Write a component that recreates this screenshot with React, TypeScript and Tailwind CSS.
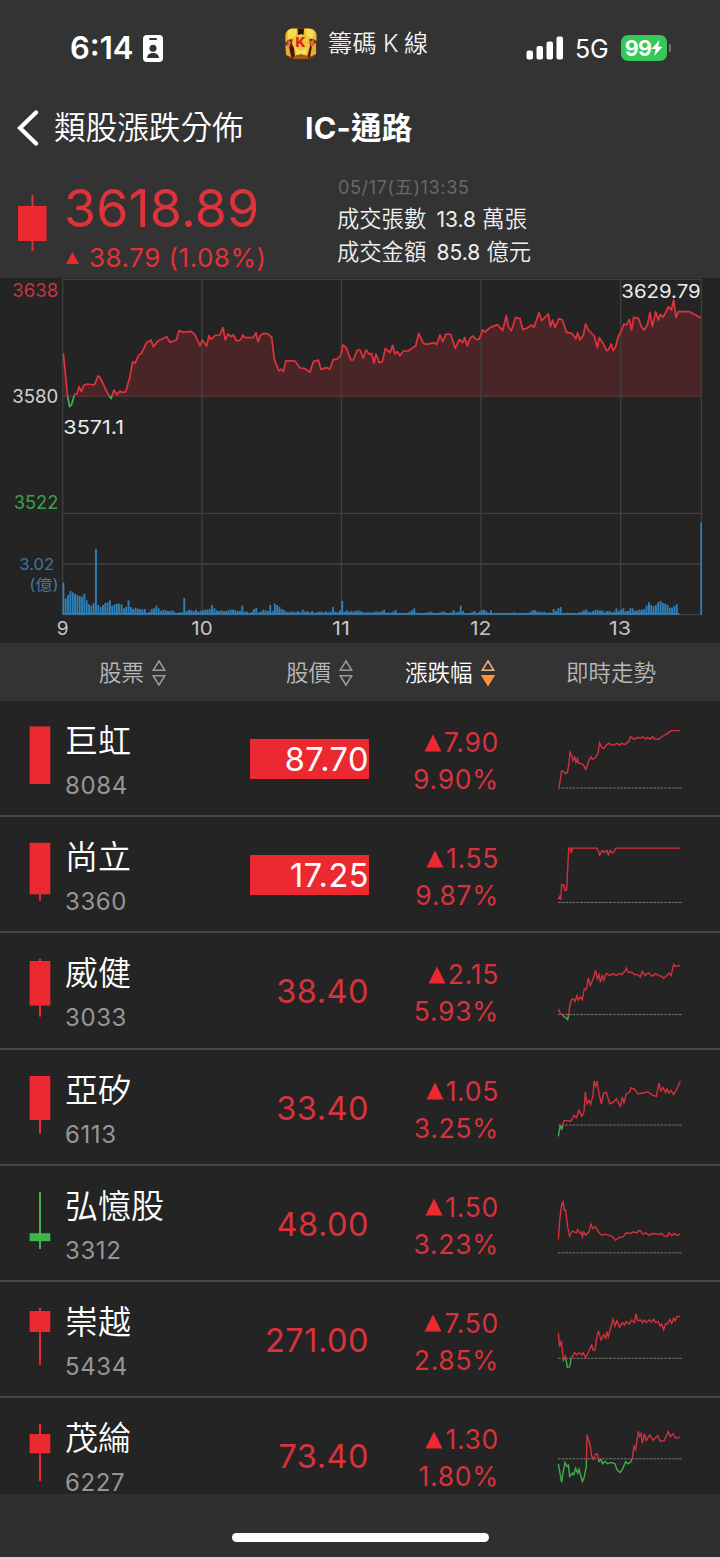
import React from "react";

type Pt = [number, number];

const RED = "#e0323d";
const GREEN = "#3fae4e";

function toPoints(values: string, dx = 0): Pt[] {
  return values
    .trim()
    .split(/\s+/)
    .map((p) => {
      const [x, y] = p.split(",").map(Number);
      return [x + dx, y] as Pt;
    });
}

const toPath = (pts: Pt[]) => "M" + pts.map((p) => p.join(" ")).join("L");

/* Index price, in thirds of a pixel */
const PRICE: Pt[] = [
  ...toPoints(
    "190,250 203,380 209,410 215,403 224,372 231,372 237,350 244,365 252,345 262,342 283,345 294,318 300,322 322,368 333,386 342,360 351,374 360,363 366,368 377,365 390,320 398,275 405,280 416,255 424,250 440,218 453,210 460,230 475,212 500,200 510,217 529,210 537,182 550,187 573,184 585,195 600,227 607,210 620,228 627,197 633,208 645,197 660,195 669,173 676,210 684,192 693,200 700,195 710,213 720,210",
  ),
  ...toPoints(
    "4,206 8,195 15,203 40,203 48,188 54,215 62,195 72,190 85,192 95,202 103,268 117,303 123,297 130,304 138,272 165,273 180,294 195,296 210,306 220,275 235,270 243,298 258,293 270,297 280,268 290,268 303,255 308,225 318,232 333,270 340,270 352,240 360,240 370,264 378,240 390,254 395,250 402,280 408,252 418,278 427,275 436,235 450,248 458,226 465,252 472,245 480,257 490,243 505,243 520,232 527,228 536,190 550,220 560,223 583,218 590,224 600,195 608,215 618,192 632,193 646,235 658,208 668,218 674,203 682,228",
    720,
  ),
  ...toPoints(
    "0,205 8,198 18,208 27,208 38,180 45,186 60,173 82,164 98,182 109,136 115,170 124,182 137,142 150,146 158,178 170,175 185,165 192,172 207,128 215,152 235,132 241,170 248,150 255,172 267,146 277,150 290,187 305,190 318,206 323,188 330,210 340,195 347,162 355,180 373,198 382,233 388,203 400,222 410,242 415,240 424,222 430,242 437,230 445,198 453,185 462,162 470,165 478,148 485,180 491,142 505,145 515,172 522,180 532,165 540,128 547,170 557,125 565,150 571,133 578,142 586,130 595,110 604,120 611,90 618,143 625,125 658,125 692,143",
    1410,
  ),
];

/* Turnover per minute from 09:00 */
const VOLUME = [
  95, 48, 58, 70, 66, 62, 57, 55, 53, 62, 42, 30, 26, 34, 196, 28, 22, 28, 34, 36, 42, 26, 30, 32, 32, 30, 18, 22, 42,
  22, 16, 20, 17, 16, 15, 16, 5, 8, 16, 18, 26, 18, 10, 14, 12, 10, 10, 12, 6, 4, 6, 6, 49, 10, 14, 12, 10, 14, 8, 10,
  12, 14, 14, 16, 28, 18, 12, 10, 12, 10, 10, 12, 14, 14, 12, 10, 10, 26, 8, 8, 4, 8, 16, 20, 6, 8, 14, 12, 10, 28,
  10, 32, 28, 22, 16, 12, 8, 6, 8, 8, 6, 10, 6, 14, 8, 10, 6, 10, 5, 6, 8, 8, 6, 8, 6, 8, 22, 8, 6, 12, 40, 8, 12, 8,
  10, 8, 10, 12, 9, 6, 6, 6, 6, 6, 8, 8, 8, 10, 14, 5, 5, 5, 8, 13, 4, 4, 4, 4, 4, 8, 12, 18, 5, 4, 4, 4, 5, 6, 8, 5,
  4, 4, 5, 8, 8, 4, 4, 6, 12, 5, 8, 26, 10, 4, 4, 4, 8, 10, 4, 8, 12, 14, 10, 4, 12, 4, 4, 4, 4, 4, 4, 4, 4, 4, 6, 4,
  4, 4, 4, 4, 4, 8, 13, 12, 8, 8, 6, 8, 4, 6, 4, 16, 10, 18, 22, 4, 4, 5, 4, 4, 5, 4, 6, 8, 12, 14, 8, 6, 10, 14, 12,
  12, 12, 6, 10, 10, 6, 8, 18, 10, 14, 18, 10, 10, 18, 18, 10, 12, 14, 14, 16, 26, 36, 28, 24, 28, 36, 40, 34, 32, 28,
  20, 20, 26, 30,
];

type Stock = {
  name: string;
  code: string;
  price: string;
  limitUp?: boolean;
  change: string;
  percent: string;
  candle: { color: string; body: Pt; wick: Pt };
  spark: { top: number; base: number; points: string };
};

const CANDLE_RED = "#ec2930";

const STOCKS: Stock[] = [
  {
    name: "巨虹",
    code: "8084",
    price: "87.70",
    limitUp: true,
    change: "7.90",
    percent: "9.90%",
    candle: { color: CANDLE_RED, body: [25.5, 83], wick: [25.5, 83] },
    spark: {
      top: 3,
      base: 264,
      points:
        "538,262 546,213 553,215 557,220 563,218 568,190 571,156 577,168 580,182 585,172 589,188 593,176 597,190 604,190 612,196 618,208 622,200 628,180 634,170 638,178 646,174 655,160 660,128 666,142 674,145 680,135 688,130 700,136 712,130 720,136 726,130 735,134 748,124 752,110 764,118 774,112 782,115 790,110 798,118 804,112 812,118 818,110 826,118 836,118 850,108 864,100 874,92 900,92",
    },
  },
  {
    name: "尚立",
    code: "3360",
    price: "17.25",
    limitUp: true,
    change: "1.55",
    percent: "9.87%",
    candle: { color: CANDLE_RED, body: [25.8, 77.3], wick: [25.8, 83.8] },
    spark: {
      top: 351.6,
      base: 608,
      points:
        "536,598 540,590 543,600 546,555 552,555 556,572 561,570 567,445 572,445 575,460 578,445 652,445 658,458 660,466 668,452 674,458 682,452 686,465 692,452 698,460 702,458 708,445 902,445",
    },
  },
  {
    name: "威健",
    code: "3033",
    price: "38.40",
    change: "2.15",
    percent: "5.93%",
    candle: { color: CANDLE_RED, body: [28, 72.6], wick: [25.6, 83.6] },
    spark: {
      top: 700.2,
      base: 945,
      points:
        "536,928 542,942 548,944 552,950 560,956 564,960 568,940 570,920 576,900 582,898 586,905 592,888 596,902 602,892 608,900 614,868 620,870 626,835 632,858 640,840 648,812 653,838 658,825 662,848 668,825 672,842 680,822 690,828 700,822 710,828 718,822 726,825 736,815 740,806 746,818 756,818 764,825 774,825 782,832 788,815 796,828 806,820 818,830 828,822 836,828 846,830 852,836 862,828 868,820 874,828 882,795 888,800 902,798",
    },
  },
  {
    name: "亞矽",
    code: "6113",
    price: "33.40",
    change: "1.05",
    percent: "3.25%",
    candle: { color: CANDLE_RED, body: [26, 70], wick: [26, 83.6] },
    spark: {
      top: -1.2,
      base: 224,
      points:
        "536,258 542,222 546,238 553,210 558,210 566,212 574,212 583,195 590,202 598,180 606,198 613,185 617,124 622,160 628,150 633,162 640,135 643,92 648,108 652,92 658,130 665,160 672,128 680,126 690,160 702,155 710,145 722,168 728,140 733,158 740,130 750,125 754,112 764,116 774,130 790,128 804,124 820,135 830,138 838,98 844,122 850,112 858,126 862,116 868,128 874,120 882,132 892,115 902,92",
    },
  },
  {
    name: "弘憶股",
    code: "3312",
    price: "48.00",
    change: "1.50",
    percent: "3.23%",
    candle: { color: "#3db54a", body: [67.2, 75.2], wick: [26, 83] },
    spark: {
      top: 347.4,
      base: 608,
      points:
        "536,568 540,510 546,462 550,455 554,480 558,480 564,530 570,558 578,542 590,548 594,538 600,548 604,545 608,560 612,545 618,555 628,545 634,522 640,535 648,530 658,548 666,555 676,552 688,555 698,560 708,570 718,562 730,560 740,548 750,550 762,545 770,548 780,540 790,552 798,548 808,555 820,550 834,552 846,550 852,556 862,560 868,548 876,556 884,550 890,556 902,552",
    },
  },
  {
    name: "崇越",
    code: "5434",
    price: "271.00",
    change: "7.50",
    percent: "2.85%",
    candle: { color: CANDLE_RED, body: [29, 50], wick: [26, 83] },
    spark: {
      top: 6,
      base: 235,
      points:
        "536,160 540,200 545,182 551,240 557,228 563,262 570,260 575,232 580,228 585,218 592,225 598,218 606,225 610,218 618,232 624,222 630,208 636,195 640,210 646,210 650,180 656,152 664,180 672,165 678,175 682,155 686,170 692,148 700,118 706,138 712,122 720,142 728,128 734,135 740,125 748,132 756,120 764,128 769,102 774,122 784,120 788,128 794,120 800,128 808,120 816,126 822,118 828,128 836,125 842,138 846,132 852,150 858,130 864,132 870,118 876,130 882,115 886,122 892,110 902,110",
    },
  },
  {
    name: "茂綸",
    code: "6227",
    price: "73.40",
    change: "1.30",
    percent: "1.80%",
    candle: { color: CANDLE_RED, body: [36, 55.3], wick: [26, 83] },
    spark: {
      top: 354.6,
      base: 537,
      points:
        "536,552 546,608 550,580 556,548 562,560 566,556 570,590 578,580 582,585 588,565 594,580 598,568 604,590 608,605 613,595 617,575 620,560 622,465 628,485 632,500 636,530 642,538 648,522 654,525 658,545 664,538 668,552 676,545 684,552 694,548 706,552 712,570 722,578 730,565 738,545 744,552 752,548 758,535 763,500 768,510 776,455 780,470 784,462 788,490 794,462 800,482 810,465 820,482 834,468 842,485 854,482 866,455 872,470 880,462 888,475 902,472",
    },
  },
];

function IdBadgeIcon() {
  return (
    <svg className="h-[27px] w-5" viewBox="0 0 20 27">
      <rect width="20" height="27" rx="4" fill="#fff" />
      <rect x="6" y="3" width="8" height="2" rx="1" fill="#333" />
      <circle cx="10" cy="13.3" r="3.5" fill="#333" />
      <path d="M4 23c.3-3.600 2.800-5 6-5s5.700 1.400 6 5z" fill="#333" />
    </svg>
  );
}

function AppIcon() {
  return (
    <svg className="mt-[28px] h-[32px] w-[32px]" viewBox="0 0 32 32">
      <defs>
        <clipPath id="app-icon">
          <rect x="0.500" y="0.500" width="31" height="30.500" rx="7" />
        </clipPath>
      </defs>
      <g clipPath="url(#app-icon)">
        <rect width="32" height="32" fill="#7a3413" />
        <path d="M0 0h32v13l-4-2-5 0-7-3-8 3-5 1-3 3z" fill="#e9bd2c" />
        <path d="M3 2c3-2 7-2 9 0l-2 7-7 2zM20 1c4-1 8 0 9 3l-1 7-6-3z" fill="#f6dc52" />
        <path d="M12.500 0h6.500l-.5 7h-5.500z" fill="#221208" />
        <path d="M8 9l8-3 8 3 1 9-3 11H10L6.500 18z" fill="#efc63a" />
        <path d="M10 20l6 3 6-3-2 7h-8z" fill="#f9dd6a" />
        <path d="M5 12l4 8 1 9H7L3 20zM27 10l-2 9-2 10h3l3-9z" fill="#4a1208" />
        <path d="M0 17l4 1 2 11-5-2zM31 15l-4 3-2 11 6-3z" fill="#e0ad35" />
        <path d="M3 12l3 2-1 5-3-1zM28 11l-3 3 1 5 4-2z" fill="#e2683a" />
        <path d="M9 28l7-2 7 2v4H9z" fill="#a35a16" />
        <text
          x="15.500"
          y="19.400"
          textAnchor="middle"
          fontSize="13.5"
          fontWeight="800"
          fill="#d9231c"
          fontFamily="Inter, sans-serif"
        >
          K
        </text>
      </g>
    </svg>
  );
}

function StatusBar() {
  return (
    <div className="grid h-24 grid-cols-[285px_241px_194px]">
      <div className="flex items-start pt-[30px] pl-[70px]">
        <span className="w-[73px] text-[31px] leading-9 font-semibold">6:14</span>
        <div className="pt-[5px]">
          <IdBadgeIcon />
        </div>
      </div>
      <div className="flex items-start">
        <AppIcon />
        <span className="mt-[26px] ml-[11px] text-[24px] leading-9 font-[350] tracking-[0.5px] text-[#f2f2f2]">
          籌碼<span className="mr-[5px] ml-[6px]">K</span>線
        </span>
      </div>
      <div className="flex items-start pt-[35px]">
        <svg className="mt-px h-6 w-[38px]" viewBox="0 0 38 24" fill="#fff">
          <rect x="0.500" y="14.500" width="6.500" height="9" rx="2" />
          <rect x="10.500" y="10" width="6.500" height="13.500" rx="2" />
          <rect x="20.500" y="5.500" width="6.500" height="18" rx="2" />
          <rect x="30.500" y="0.500" width="6.500" height="23" rx="2" />
        </svg>
        <span className="ml-[11px] w-[46px] text-[25px] leading-[28px] tracking-[-0.3px]">5G</span>
        <div className="flex h-[26px] w-[46px] items-center justify-center rounded-[7px] bg-[#34c759]">
          <span className="text-[21.500px] leading-[26px] font-bold tracking-[-0.6px]">99</span>
          <svg className="h-4 w-[12px]" viewBox="0 0 12 16">
            <path d="M8.500 0L.5 9h4.300L3.200 16 11.500 6.700H7.200z" fill="#fff" />
          </svg>
        </div>
        <span className="mt-[9px] ml-[2px] h-[8px] w-[2px] rounded-r-full bg-[#777]" />
      </div>
    </div>
  );
}

function NavBar() {
  return (
    <div className="flex h-16 items-center pl-[17px]">
      <svg className="h-[36px] w-[22px]" viewBox="0 0 22 36" fill="none">
        <path d="M19 2.500L3 18l16 15.500" stroke="#fff" strokeWidth="4.200" strokeLinecap="round" />
      </svg>
      <span className="ml-[15px] w-[251px] text-[31.600px] leading-10 font-[350]">類股漲跌分佈</span>
      <span className="text-[30.500px] leading-10 font-bold tracking-[0.2px]">IC-通路</span>
    </div>
  );
}

function Summary() {
  return (
    <div className="flex h-[118px]">
      <svg className="h-[118px] w-[66px]" viewBox="0 0 66 118" fill={CANDLE_RED}>
        <rect x="18" y="46" width="28.500" height="35" />
        <rect x="31.500" y="35" width="2" height="56" />
      </svg>
      <div className="w-[272px] pt-[19px] text-[#e0323a]">
        <div className="-ml-[2px] text-[52px] leading-[60px] tracking-[0.1px]">3618.89</div>
        <div className="flex items-center pt-px text-[26px] leading-[36px] tracking-[0.500px]">
          <svg className="mr-[10px] h-[12px] w-[13px]" viewBox="0 0 13 12">
            <path d="M6.500 0L13 12H0z" fill="#ec2930" />
          </svg>
          38.79 (1.08%)
        </div>
      </div>
      <div className="-ml-px pt-[14px]">
        <div className="ml-px text-[18px] leading-[28px] tracking-[0.650px] text-[#686868]">05/17(五)13:35</div>
        <div className="text-[22.300px] leading-8 font-[350] text-[#f0f0f0]">
          <div className="pt-px">
            成交張數 <span className="ml-1 text-[21px] font-normal">13.8</span> 萬張
          </div>
          <div>
            成交金額 <span className="ml-1 text-[21px] font-normal">85.8</span> 億元
          </div>
        </div>
      </div>
    </div>
  );
}

function IndexChart() {
  const line = toPath(PRICE);
  const area = `${line}L2102 378L190 378Z`;
  return (
    <svg
      className="block h-[365px] w-full"
      viewBox="0 24 2160 1095"
      fontFamily="Inter, 'Noto Sans CJK TC', sans-serif"
    >
      <defs>
        <clipPath id="above">
          <rect x="0" y="0" width="2160" height="378" />
        </clipPath>
        <clipPath id="below">
          <rect x="0" y="378" width="2160" height="200" />
        </clipPath>
      </defs>
      <path d={area} fill="#4a2527" clipPath="url(#above)" />
      <g stroke="#3f3f3f" strokeWidth="4">
        <path d="M188 28H2104M188 730H2104M188 882H2104M188 1034H2104" />
        <path d="M188 28V1034M606 28V1034M1024 28V1034M1443 28V1034M1862 28V1034M2104 28V1034" />
      </g>
      <path d="M188 378H2104" stroke="#583538" strokeWidth="5" />
      <g fill="none" strokeWidth="5.200" strokeLinejoin="round">
        <path d={line} stroke={RED} clipPath="url(#above)" />
        <path d={line} stroke={GREEN} clipPath="url(#below)" />
      </g>
      <g fill="#2f80b9">
        {VOLUME.map((v, i) => (
          <rect key={i} x={187.5 + i * 6.97} y={1033 - v} width="5.600" height={v} />
        ))}
        <rect x="188" y="1029" width="1850" height="5" />
        <rect x="2101" y="757" width="5" height="277" />
      </g>
      <g fontSize="54" textAnchor="end">
        <text x="175" y="80" fill="#c9343d" textLength="138" lengthAdjust="spacingAndGlyphs">3638</text>
        <text x="175" y="400" fill="#d2d2d2" textLength="138" lengthAdjust="spacingAndGlyphs">3580</text>
        <text x="175" y="718" fill="#3f9f4b" textLength="134" lengthAdjust="spacingAndGlyphs">3522</text>
      </g>
      <g fontSize="48" fill="#3d76a3" textAnchor="end">
        <text x="162" y="901" textLength="104" lengthAdjust="spacingAndGlyphs">3.02</text>
        <text x="176" y="960" fontSize="46" textLength="88" lengthAdjust="spacingAndGlyphs">(億)</text>
      </g>
      <g fontSize="57" fill="#ececec">
        <text x="190" y="491" textLength="182" lengthAdjust="spacingAndGlyphs">3571.1</text>
        <text x="1864" y="85" textLength="238" lengthAdjust="spacingAndGlyphs">3629.79</text>
      </g>
      <g fontSize="57" fill="#c6c6c6" textAnchor="middle">
        <text x="188" y="1094">9</text>
        <text x="606" y="1094" textLength="64" lengthAdjust="spacingAndGlyphs">10</text>
        <text x="1023" y="1094" textLength="54" lengthAdjust="spacingAndGlyphs">11</text>
        <text x="1442" y="1094" textLength="64" lengthAdjust="spacingAndGlyphs">12</text>
        <text x="1860" y="1094" textLength="66" lengthAdjust="spacingAndGlyphs">13</text>
      </g>
    </svg>
  );
}

function SortIcon({ active = false }: { active?: boolean }) {
  return (
    <svg className="ml-[7px] h-[28px] w-[16px]" viewBox="0 0 16 28" fill="none" strokeWidth="1.600">
      <path d="M8 2L13.700 11.200H2.300z" stroke={active ? "#e8b583" : "#999"} />
      <path
        d="M8 26L2.300 16.800h11.400z"
        stroke={active ? "#ff9a3c" : "#999"}
        fill={active ? "#ff8f2e" : "none"}
      />
    </svg>
  );
}

function ColumnHeader() {
  return (
    <div className="grid h-[58px] grid-cols-[286px_119px_161px_1fr] items-center bg-[#333333] pt-px text-[22.500px] leading-8 font-[350] text-[#b8b8b8]">
      <div className="flex items-center pl-[99px]">
        股票
        <SortIcon />
      </div>
      <div className="flex items-center">
        股價
        <SortIcon />
      </div>
      <div className="flex items-center text-white">
        漲跌幅
        <SortIcon active />
      </div>
      <div>即時走勢</div>
    </div>
  );
}

function Sparkline({ id, spark }: { id: string; spark: Stock["spark"] }) {
  const d = toPath(toPoints(spark.points));
  const { top, base } = spark;
  return (
    <svg className="h-[116.200px] w-[126px]" viewBox={`532 ${top} 378 348.6`} fill="none">
      <defs>
        <clipPath id={`${id}-up`}>
          <rect x="532" y={top} width="378" height={base - top + 1} />
        </clipPath>
        <clipPath id={`${id}-down`}>
          <rect x="532" y={base + 1} width="378" height="200" />
        </clipPath>
      </defs>
      <path d={`M535 ${base}H908`} stroke="#757575" strokeWidth="3" strokeDasharray="8 3" />
      <path d={d} stroke="#d6303b" strokeWidth="4.200" clipPath={`url(#${id}-up)`} />
      <path d={d} stroke={GREEN} strokeWidth="4.200" clipPath={`url(#${id}-down)`} />
    </svg>
  );
}

function StockRow({ stock }: { stock: Stock }) {
  const { body, wick, color } = stock.candle;
  return (
    <div className="grid h-[116.200px] shrink-0 grid-cols-[65px_185px_119px_130px_1fr] border-b-2 border-[#474747]">
      <svg className="h-[116px] w-[65px]" viewBox="0 0 65 116" fill={color}>
        <rect x="29.600" y={body[0]} width="20.700" height={body[1] - body[0]} />
        <rect x="39" y={wick[0]} width="2" height={wick[1] - wick[0]} />
      </svg>
      <div className="pt-[19px] leading-[44px]">
        <div className="text-[33px] leading-[43px] font-[350]">{stock.name}</div>
        <div className="text-[24px] leading-[46px] tracking-[0.600px] text-[#969696]">{stock.code}</div>
      </div>
      <div className="pt-[38px]">
        <div
          className={
            stock.limitUp
              ? "h-10 bg-[#ec2930] text-right text-[32.500px] leading-[41px] tracking-[0.500px] text-white"
              : "h-10 text-right text-[32.500px] leading-[41px] tracking-[0.500px] text-[#d8323c]"
          }
        >
          {stock.price}
        </div>
      </div>
      <div className="pt-[23px] text-right text-[26.500px] leading-[37px] tracking-[0.700px] text-[#d8323c]">
        <div className="flex items-center justify-end">
          <svg className="mr-[2px] h-[18px] w-[18px]" viewBox="0 0 18 18">
            <path d="M9 0.500L17.500 17.500H0.500z" fill="#ec2930" />
          </svg>
          {stock.change}
        </div>
        <div>{stock.percent}</div>
      </div>
      <div className="pl-[58.300px]">
        <Sparkline id={`s${stock.code}`} spark={stock.spark} />
      </div>
    </div>
  );
}

export default function App() {
  return (
    <div className="flex h-[1557px] w-[720px] flex-col overflow-hidden bg-[#242424] font-[Inter,'Noto_Sans_CJK_TC',sans-serif] whitespace-nowrap text-white">
      <header className="h-[278px] shrink-0 bg-[#333333]">
        <StatusBar />
        <NavBar />
        <Summary />
      </header>
      <div className="h-[365px] shrink-0">
        <IndexChart />
      </div>
      <ColumnHeader />
      <main className="flex h-[793px] shrink-0 flex-col overflow-hidden">
        {STOCKS.map((s) => (
          <StockRow key={s.code} stock={s} />
        ))}
      </main>
      <footer className="flex h-[63px] shrink-0 justify-center bg-[#303030] pt-[39px]">
        <div className="h-[9px] w-[257px] rounded-full bg-white" />
      </footer>
    </div>
  );
}
